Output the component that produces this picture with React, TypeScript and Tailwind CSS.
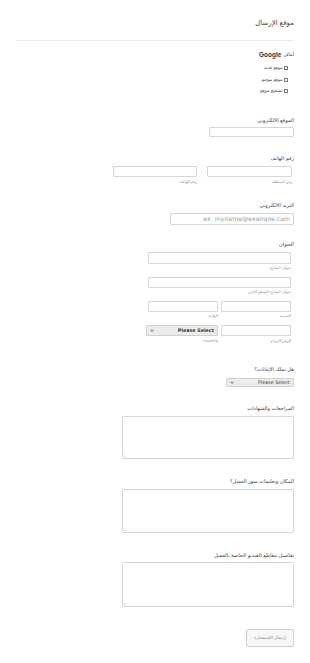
import React from "react";

const Label = ({ children, mt }: { children: React.ReactNode; mt: string }) => (
  <div className={`${mt} h-[6px] text-[5.2px] leading-[6px] text-[#444]`}>{children}</div>
);

const Sub = ({ children, mt = "mt-[2px]" }: { children: React.ReactNode; mt?: string }) => (
  <div className={`${mt} h-[4px] text-[3.8px] leading-[4px] text-[#888]`}>{children}</div>
);

const Box = ({ cls }: { cls: string }) => (
  <div className={`${cls} border border-[#d6d6d6] bg-white rounded-[1px]`} />
);

const Chevron = () => (
  <svg width="4" height="3" viewBox="0 0 4 3" className="shrink-0">
    <path d="M0.5 0.7 L2 2.3 L3.5 0.7" stroke="#333" strokeWidth="0.8" fill="none" />
  </svg>
);

const SelectBox = ({ cls, bold }: { cls: string; bold?: boolean }) => (
  <div
    className={`${cls} flex items-center justify-between border border-[#cfcfcf] bg-[#ececec] rounded-[1px] px-[3px] font-['DejaVu_Sans',sans-serif] text-[4.8px] text-[#333] ${bold ? "font-bold" : ""}`}
  >
    <span dir="ltr">Please Select</span>
    <Chevron />
  </div>
);

const TextArea = ({ cls }: { cls: string }) => (
  <div className={`${cls} relative w-[172px] border border-[#d6d6d6] bg-white rounded-[1px]`}>
    <svg width="3" height="3" viewBox="0 0 3 3" className="absolute left-[1px] bottom-[1px]">
      <path d="M0 0.5 L2.5 3 M0 1.8 L1.2 3" stroke="#aaa" strokeWidth="0.4" />
    </svg>
  </div>
);

const Check = ({ children, mt }: { children: React.ReactNode; mt: string }) => (
  <div className={`${mt} h-[6px] flex items-center gap-[1px] mr-[6px]`}>
    <span className="w-[4.5px] h-[4.5px] border-[0.5px] border-[#777] rounded-[0.5px] bg-white shrink-0" />
    <span className="text-[4.4px] leading-[6px] text-[#444]">{children}</span>
  </div>
);

export default function App() {
  return (
    <div
      dir="rtl"
      className="w-[310px] h-[663px] bg-white pr-[16px] pl-[16px] font-['Liberation_Sans','DejaVu_Sans',sans-serif] overflow-hidden"
    >
      <div className="pt-[18px] h-[28px] text-[7px] leading-[10px] text-[#444]">موقع الإرسال</div>
      <div className="mt-[12px] h-px bg-[#ececec]" />

      <div className="mt-[10px] h-[8px] leading-[8px] flex items-center gap-[2px] text-[#333]">
        <span className="text-[4.5px]">أماكن</span>
        <span className="text-[6.5px] font-bold" dir="ltr">Google</span>
      </div>
      <Check mt="mt-[6px]">موقع جديد</Check>
      <Check mt="mt-[6px]">موقع موجود</Check>
      <Check mt="mt-[5px]">تصحيح موقع</Check>

      <Label mt="mt-[23px]">الموقع الالكتروني</Label>
      <Box cls="mt-[4px] w-[85px] h-[10px]" />

      <Label mt="mt-[18px]">رقم الهاتف</Label>
      <div className="mt-[5px] mr-[2px] flex items-start">
        <div className="w-[85px]">
          <Box cls="w-[85px] h-[11px]" />
          <Sub mt="mt-[3px]">رمز المنطقة</Sub>
        </div>
        <div className="w-[10px] h-[11px] flex items-center justify-center text-[5px] text-[#999]">-</div>
        <div className="w-[84px]">
          <Box cls="w-[84px] h-[11px]" />
          <Sub mt="mt-[3px]">رقم الهاتف</Sub>
        </div>
      </div>

      <Label mt="mt-[18px]">البريد الالكتروني</Label>
      <div className="mt-[5px] w-[124px] h-[12px] border border-[#d6d6d6] rounded-[1px] flex items-center px-[3px] font-['DejaVu_Sans',sans-serif] text-[6.2px] text-[#9a9a9a]">
        <span dir="ltr">ex: myname@example.com</span>
      </div>

      <Label mt="mt-[16px]">العنوان</Label>
      <div className="mr-[3px] w-[143px]">
        <Box cls="mt-[5px] w-[143px] h-[12px]" />
        <Sub>عنوان الشارع</Sub>
        <Box cls="mt-[7px] w-[143px] h-[11px]" />
        <Sub>عنوان الشارع السطر الثاني</Sub>
        <div className="mt-[7px] flex gap-[3px]">
          <div className="w-[70px]">
            <Box cls="w-[70px] h-[11px]" />
            <Sub>المدينة</Sub>
          </div>
          <div className="w-[70px]">
            <Box cls="w-[70px] h-[11px]" />
            <Sub>الولاية</Sub>
          </div>
        </div>
        <div className="mt-[7px] flex gap-[3px]">
          <div className="w-[70px]">
            <Box cls="w-[70px] h-[11px]" />
            <Sub mt="mt-[3px]">الرمز البريدي</Sub>
          </div>
          <div className="w-[72px]">
            <SelectBox cls="w-[72px] h-[11px]" bold />
            <Sub mt="mt-[3px]">
              <span className="font-['DejaVu_Sans',sans-serif]" dir="ltr">Country</span>
            </Sub>
          </div>
        </div>
      </div>

      <Label mt="mt-[23px]">هل تملك الإثباتات؟</Label>
      <SelectBox cls="mt-[6px] w-[68px] h-[9px]" />

      <Label mt="mt-[18px]">المراجعات والشهادات</Label>
      <TextArea cls="mt-[5px] h-[43px]" />

      <Label mt="mt-[19px]">المكان وتعليمات صور العميل؟</Label>
      <TextArea cls="mt-[5px] h-[44px]" />

      <Label mt="mt-[19px]">تفاصيل مقاطع الفيديو الخاصة بالعميل</Label>
      <TextArea cls="mt-[4px] h-[45px]" />

      <button className="mt-[22px] w-[48px] h-[18px] border border-[#cfcfcf] bg-[#f7f7f7] rounded-[2px] text-[4.5px] text-[#888] flex items-center justify-center">
        إرسال الإستشارة
      </button>
    </div>
  );
}
